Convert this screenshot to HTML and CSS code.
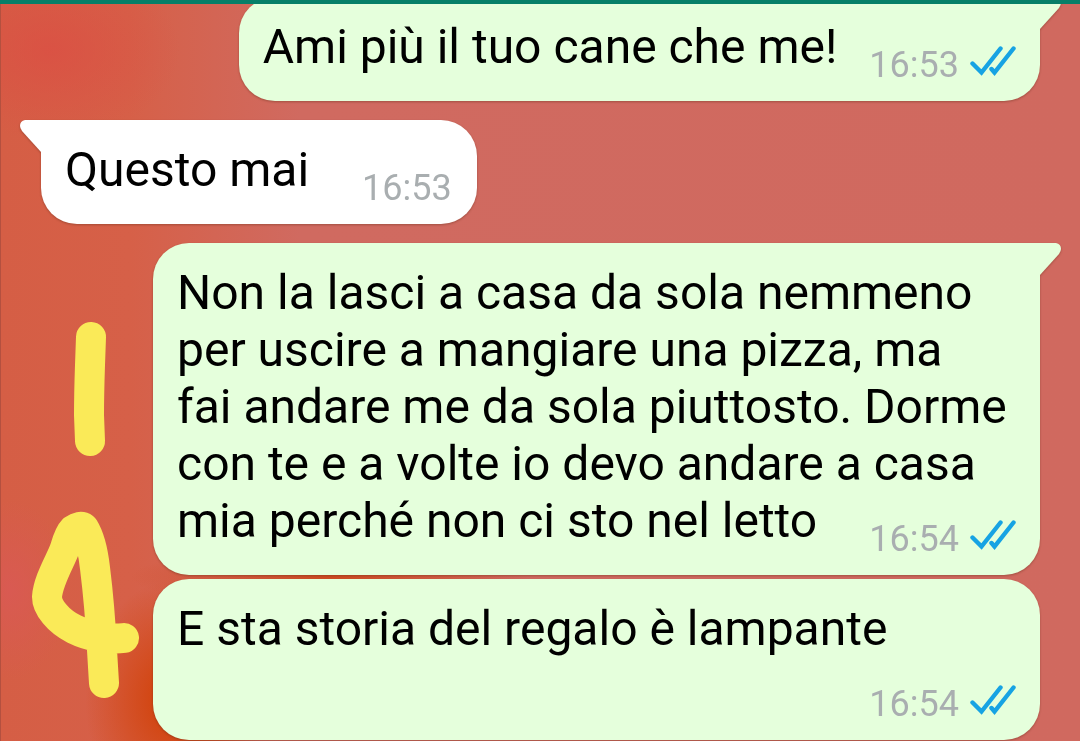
FILE: index.html
```html
<!DOCTYPE html>
<html lang="it">
<head>
    <meta charset="UTF-8">
    <meta name="viewport" content="width=device-width, initial-scale=1.0">
    <title>Chat</title>
    <link rel="stylesheet" href="styles.css">
</head>
<body>
    <svg width="0" height="0" class="defs" aria-hidden="true">
        <symbol id="ticks" viewBox="0 0 46 30">
            <path d="M2.5 17.5 L11.5 26.5 L30.5 2.5 M21.5 23 L24.5 26.5 L43.5 2.5" fill="none" stroke="#17a3e3" stroke-width="4.4" stroke-linecap="round"/>
        </symbol>
        <symbol id="tail" viewBox="0 0 22 33">
            <path d="M0 0 H16 Q21 1 21 6 Q21 8 19 11 L0 32 Z" fill="currentColor"/>
        </symbol>
    </svg>

    <header class="topbar"></header>

    <main class="chat">
        <div class="msg sent">
            <svg class="tail"><use href="#tail"/></svg>
            <p>Ami più il tuo cane che me!</p>
            <div class="meta">
                <time>16:53</time>
                <svg class="ticks"><use href="#ticks"/></svg>
            </div>
        </div>

        <div class="msg received">
            <svg class="tail"><use href="#tail"/></svg>
            <p>Questo mai</p>
            <div class="meta">
                <time>16:53</time>
            </div>
        </div>

        <div class="msg sent wide">
            <svg class="tail"><use href="#tail"/></svg>
            <p>Non la lasci a casa da sola nemmeno<br>
                per uscire a mangiare una pizza, ma<br>
                fai andare me da sola piuttosto. Dorme<br>
                con te e a volte io devo andare a casa<br>
                mia perché non ci sto nel letto</p>
            <div class="meta">
                <time>16:54</time>
                <svg class="ticks"><use href="#ticks"/></svg>
            </div>
        </div>

        <div class="msg sent wide next">
            <p>E sta storia del regalo è lampante</p>
            <div class="meta">
                <time>16:54</time>
                <svg class="ticks"><use href="#ticks"/></svg>
            </div>
        </div>
    </main>

    <!-- marker doodle over the wallpaper -->
    <svg class="doodle" viewBox="0 0 110 380" aria-hidden="true">
        <path d="M61 17 L60 45 Q59 75 59 95 L60 121"/>
        <path d="M94 318 C80 320 60 317 44 309 C28 301 17 287 17 277 C18 260 32 238 35 228 Q39 214 43 210 Q50 205 54 208 Q62 221 65 248 C69 280 71 310 72 330 L74 363"/>
    </svg>
</body>
</html>
```

FILE: styles.css
```css
*{
    margin: 0;
    padding: 0;
    box-sizing: border-box;
}
body{
    min-height: 100vh;
    overflow: hidden;
    font-family: Roboto, Arial, sans-serif;
    border-left: 1px solid #b4503f;
    background:
        radial-gradient(ellipse 90px 120px at 175px 700px, #d24510 20%, transparent),
        radial-gradient(ellipse 200px 30px at 330px 577px, #cf4a20, transparent),
        radial-gradient(ellipse 130px 90px at 50px 50px, rgba(220, 77, 67, 0.7), transparent),
        radial-gradient(ellipse 60px 90px at 10px 590px, #d95a52, transparent),
        linear-gradient(to right, #d55e45 0, #d66048 130px, #d06a60 300px, #d0695f);
}
.defs{
    position: absolute;
}
.topbar{
    position: fixed;
    top: 0;
    left: 0;
    right: 0;
    height: 4px;
    background: #067f68;
    z-index: 2;
}
.chat{
    display: flex;
    flex-direction: column;
    gap: 19px;
    padding: 0 40px;
    /* scrolled slightly under the top bar */
    margin-top: -3px;
}
.msg{
    position: relative;
    display: flex;
    align-items: flex-end;
    padding: 21px 24px 15px 24px;
    border-radius: 36px;
    filter: drop-shadow(0 1px 1px rgba(90, 40, 20, 0.4));
}
.msg p{
    color: #000;
    font-size: 48px;
    line-height: 57px;
    margin-bottom: 11px;
}
.sent{
    align-self: flex-end;
    gap: 32px;
    background: #e5ffdc;
    color: #e5ffdc;
    border-top-right-radius: 0;
}
.received{
    align-self: flex-start;
    gap: 53px;
    padding-right: 25px;
    background: #fff;
    color: #fff;
    border-top-left-radius: 0;
}
/* time shares the text's cell, in its bottom corner */
.wide{
    display: grid;
    width: calc(100% - 112px);
}
.wide p,
.wide .meta{
    grid-area: 1 / 1;
}
.wide .meta{
    align-self: end;
    justify-self: end;
}
.next{
    margin-top: -15px;
    border-top-right-radius: 36px;
}
.next p{
    min-height: 114px;
}
.meta{
    display: flex;
    align-items: center;
    gap: 11px;
    color: #a9aeb0;
    font-size: 36px;
    line-height: 42px;
}
.ticks{
    width: 46px;
    height: 30px;
    margin-bottom: 8px;
}
.tail{
    position: absolute;
    top: 0;
    left: 100%;
    width: 22px;
    height: 33px;
}
.received .tail{
    left: auto;
    right: 100%;
    transform: scaleX(-1);
}
.doodle{
    position: absolute;
    left: 30px;
    top: 320px;
    width: 110px;
    height: 380px;
    fill: none;
    stroke: #faea58;
    stroke-width: 30px;
    stroke-linecap: round;
    stroke-linejoin: round;
}
```
